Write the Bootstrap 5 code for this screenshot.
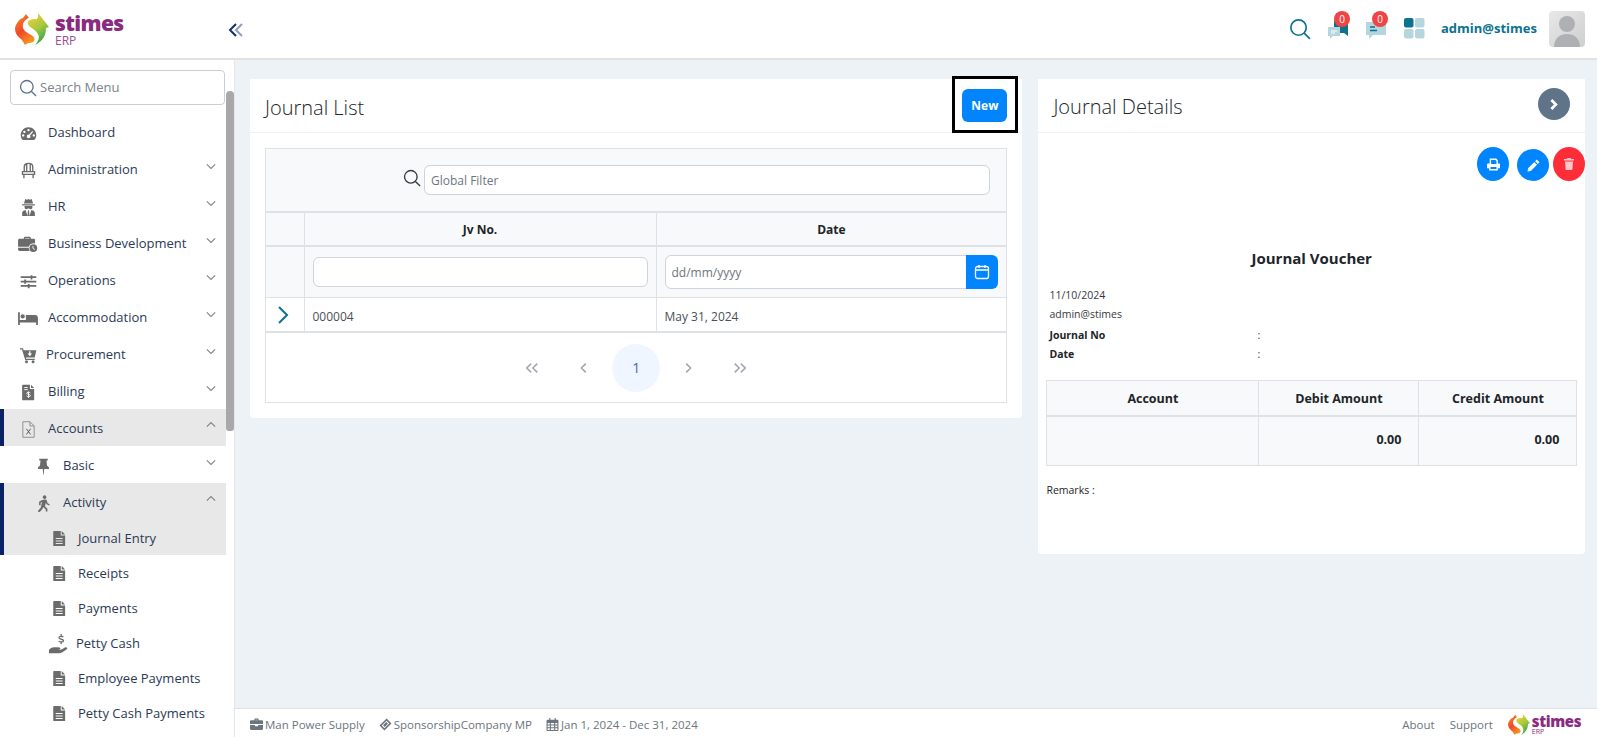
<!DOCTYPE html>
<html lang="en">
<head>
  <meta charset="UTF-8">
  <title>Journal Entry</title>
  <link href="https://cdn.jsdelivr.net/npm/bootstrap@5.3.0/dist/css/bootstrap.min.css" rel="stylesheet">
  <style>
    body { font-family: "Open Sans", "Liberation Sans", sans-serif; height: 737px; overflow: hidden; background: #fff; color: #212529; }
    .top-bar { height: 60px; border-bottom: 2px solid #e2e2e2; padding: 0 12px 0 15px; }
    .brand-mark { width: 34px; height: 32px; }
    .brand-text { line-height: 1; margin-left: 6px; width: 66px; color: #8a2b81; }
    .brand-name { font-size: 21px; font-weight: 800; letter-spacing: -.6px; display: block; line-height: 22px; }
    .brand-sub { font-size: 12px; display: block; line-height: 11px; margin-top: 1px; color: #9a4f93; }
    .collapse-btn { margin-left: 107px; margin-top: 2px; width: 16px; height: 16px; }
    .top-icon { position: relative; width: 22px; height: 22px; margin-right: 16px; }
    .top-icon svg { width: 22px; height: 22px; display: block; }
    .count-pill { position: absolute; top: -7px; right: -1px; width: 16px; height: 16px; border-radius: 50%; background: #ef4444; color: #fff; font-size: 10px; line-height: 16px; text-align: center; }
    .user-name { font-size: 13px; font-weight: 700; color: #0b7290; margin: 0 12px 0 0; }
    .avatar { width: 36px; height: 36px; border-radius: 4px; background: linear-gradient(135deg, #e8e8e8, #cfcfcf); overflow: hidden; }
    .page-body { height: 677px; }
    .side-bar { width: 235px; flex: none; position: relative; border-right: 1px solid #e3e6ea; overflow: hidden; }
    .side-search { margin: 10px 9px 8px 10px; height: 35px; border: 1px solid #c9ced6; border-radius: 4px; padding: 0 8px; }
    .side-search svg { width: 18px; height: 18px; flex: none; }
    .side-search input { border: 0; outline: 0; width: 100%; font-size: 13px; margin-left: 3px; padding: 0; color: #6c757d; }
    .side-search input::placeholder { color: #7a828a; }
    .side-list { width: 226px; list-style: none; margin: 0; padding: 0; }
    .side-item { height: 37px; padding: 3px 9px 0 20px; font-size: 13px; color: #2b3a55; }
    .side-item.level-2 { padding-left: 35px; }
    .side-item.level-3 { height: 35px; padding-left: 51px; padding-top: 2px; }
    .side-item.on { background: #e8e8e8; box-shadow: inset 4px 0 0 #0a2166; }
    .side-ic { width: 28px; flex: none; display: flex; align-items: center; }
    .side-ic svg { width: 17px; height: 17px; fill: #6b6b6b; }
    .side-ic.tight { width: 26px; }
    .side-ic.wide { width: 30px; margin-left: -2px; }
    .side-ic.wide svg { width: 20px; height: 17px; }
    .side-ic.hand { width: 27px; margin-left: -2px; }
    .side-ic.hand svg { width: 20px; height: 20px; }
    .side-ic.sheet { width: 27px; padding-left: 1px; }
    .side-ic.sheet svg { width: 15px; height: 15px; }
    .side-arrow { width: 10px; height: 10px; margin-left: auto; margin-right: 1px; margin-top: -8px; fill: none; stroke: #7b838c; stroke-width: 1.300; }
    .side-thumb { position: absolute; top: 31px; right: 0; width: 8px; height: 340px; background: #a8a8a8; border-radius: 4px 4px 3px 3px; }
    .work-area { background: #edf2f6; min-width: 0; }
    .work-scroll { padding: 19px 12px 0 15px; gap: 16px; }
    .panel { border: 0; border-radius: 4px; }
    .panel-left { width: 773px; height: 339px; }
    .panel-right { width: 547px; height: 475px; }
    .panel-head { height: 54px; padding: 0 15px; background: #fff; border-bottom: 1px solid #eef0f2; }
    .panel-title { font-size: 20px; font-weight: 300; margin: 0; margin-top: 2px; color: #212529; }
    .panel-left .panel-title { margin-top: 4px; }
    .btn-new { position: relative; width: 45px; height: 33px; padding: 0; font-size: 12px; font-weight: 700; background: #0085ff; border: 0; border-radius: 6px; color: #fff; }
    .new-mark { position: absolute; inset: -13px -11px -11px -10px; border: 3px solid #000; pointer-events: none; }
    .panel-body-list { padding: 15px; }
    .grid-box { border: 1px solid #dee2e6; }
    .filter-bar { height: 63px; background: #f8f9fa; border-bottom: 1px solid #dee2e6; padding: 0 16px 0 137px; }
    .filter-bar svg { width: 18px; height: 18px; flex: none; margin-right: 3px; margin-top: -4px; }
    .soft-input { border: 1px solid #ced4da; border-radius: 6px; font-size: 12px; height: 30px; padding: 0 6px; box-shadow: none; }
    .soft-input::placeholder { color: #6c757d; }
    .grid-table { table-layout: fixed; font-size: 12px; margin: 0; }
    .grid-table th { background: #f8f9fa; text-align: center; font-weight: 700; height: 33px; padding: 3px 8px 0; vertical-align: middle; border-bottom: 2px solid #dee2e6; color: #212529; }
    .grid-table .filter-row td { background: #f8f9fa; height: 52px; padding: 0 8px; vertical-align: middle; }
    .grid-table .data-row td { height: 34px; padding: 4px 8px 0; vertical-align: middle; color: #495057; border-bottom: 0; }
    .grid-table tr > :first-child { border-left: 0; }
    .grid-table tr > :last-child { border-right: 0; }
    .filter-row td { border-top: 0; }
    .cal-btn { width: 32px; height: 34px; padding: 0; background: #0085ff; border: 0; border-radius: 0 6px 6px 0; }
    .cal-btn svg { width: 16px; height: 16px; }
    .date-input { height: 34px; border-radius: 6px 0 0 6px; padding-top: 2px; }
    .row-open { width: 14px; height: 18px; display: block; margin: -4px 0 0 2px; }
    .pager-row { height: 70px; border-top: 1px solid #dee2e6; }
    .pager-list { margin: 0; gap: 5px; }
    .pager-list .page-link { width: 48px; height: 48px; display: flex; align-items: center; justify-content: center; padding: 0; border: 0; background: none; border-radius: 50% !important; color: #4f46e5; font-size: 14px; }
    .pager-list .page-link svg { width: 14px; height: 14px; fill: none; stroke: #a1a8b3; stroke-width: 1.800; }
    .pager-list .page-item.active .page-link { background: #eff6ff; color: #4f5bd5; }
    .round-btn { border: 0; padding: 0; border-radius: 50%; display: flex; align-items: center; justify-content: center; color: #fff; }
    .toggle-btn { width: 32px; height: 32px; background: #5f7389; margin-top: -3px; }
    .toggle-btn svg, .act-btn svg { width: 13px; height: 13px; fill: #fff; }
    .act-row { height: 34px; margin-top: 14px; }
    .act-btn { width: 32px; height: 34px; background: #0085ff; }
    .act-print { margin-right: 8px; }
    .act-edit { height: 32px; margin: 2px 4px 0 0; }
    .act-del { background: #ff2d37; }
    .act-del svg { fill: #ffc7c9; width: 12px; height: 12px; }
    .vch-title { font-size: 15px; font-weight: 700; text-align: center; margin: 67px 0 18px; line-height: 20px; }
    .vch-meta { font-size: 10.500px; padding-left: 11px; line-height: 19px; color: #343a40; }
    .vch-gap { margin-top: 2px; }
    .vch-label { font-weight: 700; width: 208px; color: #212529; }
    .vch-table { table-layout: fixed; width: 531px; margin: 16px 0 0 8px; font-size: 12.500px; }
    .vch-table th { background: #f8f9fa; text-align: center; font-weight: 700; height: 35px; padding: 3px 0 0; vertical-align: middle; border-bottom: 2px solid #dee2e6; color: #212529; }
    .vch-table td { background: #f8f9fa; height: 50px; padding: 0 17px 0 0; vertical-align: middle; text-align: right; font-weight: 700; color: #212529; }
    .vch-remark { font-size: 10.500px; margin: 17px 0 0 8px; color: #212529; }
    .foot-bar { height: 29px; margin-top: auto; background: #fff; border-top: 1px solid #dfe2e6; padding: 3px 16px 0 15px; font-size: 11.500px; color: #6c757d; }
    .foot-bar svg { width: 13px; height: 13px; fill: #6c757d; margin-right: 2px; flex: none; }
    .foot-part { margin-right: 14px; }
    .foot-link { margin-right: 15px; color: #6c757d; text-decoration: none; }
    .foot-bar .foot-mark { width: 22px; height: 21px; margin: 0 2px 0 0; fill: initial; }
    .foot-brand { color: #8a2b81; line-height: 1; }
    .foot-name { font-size: 15px; font-weight: 800; letter-spacing: -.4px; display: block; line-height: 13px; }
    .foot-sub { font-size: 7px; display: block; line-height: 7px; }
  </style>
</head>
<body>
  <svg width="0" height="0" class="position-absolute">
    <defs>
      <linearGradient id="swoopRed" x1="0" y1="0" x2="0.6" y2="1"><stop offset="0" stop-color="#f59a23"/><stop offset="0.55" stop-color="#f0472a"/><stop offset="1" stop-color="#f7941d"/></linearGradient>
      <linearGradient id="swoopGreen" x1="0.2" y1="0" x2="0.7" y2="1"><stop offset="0" stop-color="#f5cf3a"/><stop offset="0.5" stop-color="#a8c83c"/><stop offset="1" stop-color="#22a24a"/></linearGradient>
      <symbol id="logoMark" viewBox="0 0 34 32">
        <path fill="url(#swoopRed)" d="M11 1l3 4C9 7 7 11 8 15c2 6 11 6 11.500 11 .5 3-2.500 4-6.500 4l-3 2-3-5C3 24 0 20 0 16 0 12 4 6 8 5z"/>
        <path fill="url(#swoopGreen)" d="M23 0l11 14-3 1c0 7-3 13-11 17 4-4 4-8 2-11-3-5-10-5-10.500-10C11 7 14 5 18 5h5z"/>
        <path fill="none" stroke="#fff" stroke-width="2.500" d="M22 5C14 4 10 8 12 12c2 5 10 5 10.500 12 .2 3-2.500 6-5.500 7"/>
      </symbol>
      <symbol id="icSearch" viewBox="0 0 20 20"><circle cx="8.700" cy="8.700" r="7" fill="none" stroke="currentColor" stroke-width="1.500"/><path d="M13.800 13.800L19 19" stroke="currentColor" stroke-width="1.500" fill="none"/></symbol>
      <symbol id="icGauge" viewBox="0 0 24 24"><path fill-rule="evenodd" d="M12 3C5.900 3 1 7.900 1 14c0 2.400.8 4.600 2 6.300.3.400.7.700 1.200.700h15.600c.5 0 .9-.3 1.200-.7 1.200-1.700 2-3.900 2-6.300 0-6.100-4.900-11-11-11zM12 5.500a1.700 1.700 0 1 1 0 3.400 1.700 1.700 0 0 1 0-3.400zM6.200 8a1.700 1.700 0 1 1 0 3.400 1.700 1.700 0 0 1 0-3.400zM4.500 13a1.700 1.700 0 1 1 0 3.400 1.700 1.700 0 0 1 0-3.400zM19.500 13a1.700 1.700 0 1 1 0 3.400 1.700 1.700 0 0 1 0-3.400zM17.300 8.500l1.200 1-4.300 5.300a2.500 2.500 0 1 1-1.500-1.100z"/></symbol>
      <symbol id="icChair" viewBox="0 0 24 24"><path fill="none" stroke="#6b6b6b" stroke-width="1.900" d="M6 13V7c0-3 2.500-5 6-5s6 2 6 5v6M9.500 3v10M14.500 3v10M3.500 13.500h17v4h-17zM5.500 17.500V23M18.500 17.500V23"/></symbol>
      <symbol id="icSpy" viewBox="0 0 24 24"><path d="M7.500 0l2.500 1 2-1 2 1 2.500-1 2 6.500h-13zM3 7.500h18V9H3zM6.500 10h11v2.500c0 1-1 2-2.500 2s-2-1-3-1-1.500 1-3 1-2.500-1-2.500-2zM3 24v-4c0-2.500 2-4 5-4.500L10.500 24zM21 24v-4c0-2.500-2-4-5-4.500L13.500 24zM11.300 16h1.400l.8 8h-3z"/></symbol>
      <symbol id="icBag" viewBox="0 0 28 24"><path fill-rule="evenodd" d="M8 4V3c0-1 1-2 2-2h6c1 0 2 1 2 2v1h4c1.500 0 2 1 2 2v4.500a7 7 0 0 0-9 4.500H0V6c0-1 .7-2 2-2zM10 3v1h6V3zM0 16.500h15c0 1.700.5 3 1.500 4.500H2c-1 0-2-.7-2-2z"/><circle cx="21.500" cy="17" r="5.500"/><path d="M21 14v3.500l2.500 1.500" stroke="#fff" stroke-width="1.200" fill="none"/></symbol>
      <symbol id="icSliders" viewBox="0 0 24 24"><path d="M1 4.500h22v2.500H1zM1 10.800h22v2.500H1zM1 17h22v2.500H1z"/><path d="M15 3h2.500v6H15zM6 9h2.500v6H6zM11 15.500h2.500v6H11z"/></symbol>
      <symbol id="icBed" viewBox="0 0 28 24"><path fill-rule="evenodd" d="M0 3h2.500v11H11V7h13c2.500 0 4 1.500 4 4v10h-2.500v-3.500h-23V21H0z"/><circle cx="6.500" cy="9" r="3"/></symbol>
      <symbol id="icCart" viewBox="0 0 26 24"><path d="M0 1h4.500l1 3H25l-2.500 11H9l.5 2h13v2H8L3 3H0z"/><circle cx="10" cy="21.500" r="2.300"/><circle cx="20" cy="21.500" r="2.300"/><path fill="#fff" d="M14 5.500h2v3.500h2.500l-3.500 4-3.500-4H14z"/></symbol>
      <symbol id="icBill" viewBox="0 0 24 24"><path d="M4 1h10v6h6v15c0 .6-.4 1-1 1H4c-.6 0-1-.4-1-1V2c0-.6.4-1 1-1zM15.500 1l4.500 4.500h-4.500z"/><path fill="none" stroke="#fff" stroke-width="1.300" d="M6 5h5M6 8h5M14.500 12.500c-1-1.200-5-1.200-5 .7 0 2 5.200 1 5.200 3.100 0 2-4.200 2-5.400.6M12 10.500v9"/></symbol>
      <symbol id="icExcel" viewBox="0 0 24 24"><path fill="none" stroke="#8a8a8a" stroke-width="1.300" d="M4 1h10l6 6v16H4zM14 1v6h6"/><path fill="none" stroke="#555" stroke-width="1.400" d="M9 11l6 8M15 11l-6 8"/></symbol>
      <symbol id="icPin" viewBox="0 0 24 24"><path d="M6 1h12v2.500h-1.800l.8 7.500c2 .9 3 2.500 3 4.500H13l-.7 8h-.6l-.7-8H4c0-2 1-3.600 3-4.500l.8-7.500H6z"/></symbol>
      <symbol id="icWalk" viewBox="0 0 24 24"><circle cx="13.500" cy="3" r="2.500"/><path d="M10 7l4.500-.7c1.300 0 2 .7 2.300 1.700l1 3.500 3 1.500-.8 1.800-3.700-1.700-1-2.300-1.300 5 3.500 3.500v4h-2.300v-3l-3.700-3.500-1 3-4.500 5L4 22.500l4-4.500 2-8-2 1v3.500H5.800V9.700z"/></symbol>
      <symbol id="icDoc" viewBox="0 0 24 24"><path fill-rule="evenodd" d="M3 0h11v7h7v16c0 .6-.4 1-1 1H3c-.6 0-1-.4-1-1V1c0-.6.4-1 1-1zM6 11v1.700h11V11zM6 15v1.700h11V15zM6 19v1.700h11V19zM15.500 0L21 5.500h-5.500z"/></symbol>
      <symbol id="icHand" viewBox="0 0 28 28"><path d="M0 22c2-2 4-3.500 7-3.500h4c2.500 0 5 .5 5 2s-2.500 2-6 2h3c3 0 5-1 8-3 2-1.200 4-1 4.500 0s-.5 2-2 3c-3 2-6 4.500-10 4.500H0z"/><path fill="none" stroke="#6b6b6b" stroke-width="1.800" d="M20 4.500c-1-1.500-6-1.500-6 .8 0 2.700 6.300 1.400 6.300 4 0 2.300-5 2.300-6.800.7M17 0v2.500M17 12v2.500"/></symbol>
      <symbol id="icBrief" viewBox="0 0 24 24"><path fill-rule="evenodd" d="M8 4V2.500C8 1.700 8.700 1 9.500 1h5c.8 0 1.500.7 1.500 1.500V4h6c1 0 2 1 2 2v5H0V6c0-1 1-2 2-2zM10 3v1h4V3zM0 13h9v2h6v-2h9v7c0 1-1 2-2 2H2c-1 0-2-1-2-2z"/></symbol>
      <symbol id="icTicket" viewBox="0 0 24 24"><path fill-rule="evenodd" d="M14 1l9 9-13 13-9-9zM14 5L5 14l5 5 9-9zM13.500 7.500l3 3-6 6-3-3z"/></symbol>
      <symbol id="icCal" viewBox="0 0 24 24"><path fill-rule="evenodd" d="M6 0h2v3h8V0h2v3h3c1 0 2 1 2 2v17c0 1-1 2-2 2H3c-1 0-2-1-2-2V5c0-1 1-2 2-2h3zM3 9v3h4V9zM9 9v3h6V9zM17 9v3h4V9zM3 14v3h4v-3zM9 14v3h6v-3zM17 14v3h4v-3zM3 19v3h4v-3zM9 19v3h6v-3zM17 19v3h4v-3z"/></symbol>
      <symbol id="icPrint" viewBox="0 0 24 24"><path fill-rule="evenodd" d="M5 1h12l3 3v6h2c1 0 2 1 2 2v7h-4v4H4v-4H0v-7c0-1 1-2 2-2h3zM7.500 3.500V11h10V5.500l-2-2zM6.500 16.500v4h11v-4z"/></symbol>
      <symbol id="icPen" viewBox="0 0 24 24"><path d="M18 1l5 5-3 3-5-5zM13.500 5.500l5 5L7 22l-6 1 1-6z"/></symbol>
      <symbol id="icTrash" viewBox="0 0 24 24"><path d="M9 0h6l1 2h6v3H2V2h6zM4 7h16l-1 15c0 1-1 2-2 2H7c-1 0-2-1-2-2z"/></symbol>
      <symbol id="icChevRight" viewBox="0 0 24 24"><path d="M8 2l10 10-10 10-3.500-3.500L11 12 4.500 5.500z"/></symbol>
    </defs>
  </svg>

  <header class="top-bar d-flex align-items-center">
    <svg class="brand-mark"><use href="#logoMark"/></svg>
    <div class="brand-text">
      <span class="brand-name">stimes</span>
      <span class="brand-sub">ERP</span>
    </div>
    <svg class="collapse-btn" viewBox="0 0 16 16" fill="none" stroke-width="2"><path d="M14 2L8 8l6 6" stroke="#8fa0bf"/><path d="M8 2L2 8l6 6" stroke="#12306e"/></svg>

    <div class="ms-auto d-flex align-items-center">
      <div class="top-icon" style="color:#0b7290"><svg><use href="#icSearch"/></svg></div>
      <div class="top-icon">
        <svg viewBox="0 0 22 22"><path fill="#0b7290" d="M7 3h14v15l-4-3H7z"/><path fill="#b5d5df" d="M1 9h12v9H6l-3 3v-3H1z"/><path stroke="#fff" d="M4 13h6M4 15h4"/></svg>
        <span class="count-pill">0</span>
      </div>
      <div class="top-icon">
        <svg viewBox="0 0 22 22"><path fill="#b5d5df" d="M1 4h20v13H8l-4 4v-4H1z"/><path stroke="#0b7290" stroke-width="1.500" d="M5 9h5M5 12.500h7"/></svg>
        <span class="count-pill">0</span>
      </div>
      <div class="top-icon">
        <svg viewBox="0 0 22 22"><rect x="1" width="9.500" height="9.500" rx="2" fill="#0b7290"/><rect x="12" width="9.500" height="9.500" rx="2" fill="#b5d5df"/><rect x="1" y="11" width="9.500" height="9.500" rx="2" fill="#b5d5df"/><rect x="12" y="11" width="9.500" height="9.500" rx="2" fill="#b5d5df"/></svg>
      </div>
      <p class="user-name">admin@stimes</p>
      <div class="avatar"><svg viewBox="0 0 36 36" width="36" height="36"><circle cx="18" cy="13" r="8" fill="#aeb0b3"/><path d="M5 36c0-9 6-13 13-13s13 4 13 13z" fill="#aeb0b3"/></svg></div>
    </div>
  </header>

  <div class="page-body d-flex">
    <aside class="side-bar">
      <div class="side-search d-flex align-items-center" style="color:#5f7389">
        <svg><use href="#icSearch"/></svg>
        <input type="text" placeholder="Search Menu">
      </div>
      <div class="side-thumb"></div>
      <ul class="side-list">
        <li class="side-item d-flex align-items-center"><span class="side-ic"><svg><use href="#icGauge"/></svg></span>Dashboard</li>
        <li class="side-item d-flex align-items-center"><span class="side-ic"><svg><use href="#icChair"/></svg></span>Administration<svg class="side-arrow" viewBox="0 0 12 12"><path d="M1 4l5 5 5-5"/></svg></li>
        <li class="side-item d-flex align-items-center"><span class="side-ic"><svg><use href="#icSpy"/></svg></span>HR<svg class="side-arrow" viewBox="0 0 12 12"><path d="M1 4l5 5 5-5"/></svg></li>
        <li class="side-item d-flex align-items-center"><span class="side-ic wide"><svg><use href="#icBag"/></svg></span>Business Development<svg class="side-arrow" viewBox="0 0 12 12"><path d="M1 4l5 5 5-5"/></svg></li>
        <li class="side-item d-flex align-items-center"><span class="side-ic"><svg><use href="#icSliders"/></svg></span>Operations<svg class="side-arrow" viewBox="0 0 12 12"><path d="M1 4l5 5 5-5"/></svg></li>
        <li class="side-item d-flex align-items-center"><span class="side-ic wide"><svg><use href="#icBed"/></svg></span>Accommodation<svg class="side-arrow" viewBox="0 0 12 12"><path d="M1 4l5 5 5-5"/></svg></li>
        <li class="side-item d-flex align-items-center"><span class="side-ic tight"><svg><use href="#icCart"/></svg></span>Procurement<svg class="side-arrow" viewBox="0 0 12 12"><path d="M1 4l5 5 5-5"/></svg></li>
        <li class="side-item d-flex align-items-center"><span class="side-ic"><svg><use href="#icBill"/></svg></span>Billing<svg class="side-arrow" viewBox="0 0 12 12"><path d="M1 4l5 5 5-5"/></svg></li>
        <li class="side-item on d-flex align-items-center"><span class="side-ic"><svg><use href="#icExcel"/></svg></span>Accounts<svg class="side-arrow" viewBox="0 0 12 12"><path d="M1 8l5-5 5 5"/></svg></li>
        <li class="side-item level-2 d-flex align-items-center"><span class="side-ic"><svg><use href="#icPin"/></svg></span>Basic<svg class="side-arrow" viewBox="0 0 12 12"><path d="M1 4l5 5 5-5"/></svg></li>
        <li class="side-item level-2 on d-flex align-items-center"><span class="side-ic"><svg><use href="#icWalk"/></svg></span>Activity<svg class="side-arrow" viewBox="0 0 12 12"><path d="M1 8l5-5 5 5"/></svg></li>
        <li class="side-item level-3 on d-flex align-items-center"><span class="side-ic sheet"><svg><use href="#icDoc"/></svg></span>Journal Entry</li>
        <li class="side-item level-3 d-flex align-items-center"><span class="side-ic sheet"><svg><use href="#icDoc"/></svg></span>Receipts</li>
        <li class="side-item level-3 d-flex align-items-center"><span class="side-ic sheet"><svg><use href="#icDoc"/></svg></span>Payments</li>
        <li class="side-item level-3 d-flex align-items-center"><span class="side-ic hand"><svg><use href="#icHand"/></svg></span>Petty Cash</li>
        <li class="side-item level-3 d-flex align-items-center"><span class="side-ic sheet"><svg><use href="#icDoc"/></svg></span>Employee Payments</li>
        <li class="side-item level-3 d-flex align-items-center"><span class="side-ic sheet"><svg><use href="#icDoc"/></svg></span>Petty Cash Payments</li>
      </ul>
    </aside>

    <main class="work-area flex-grow-1 d-flex flex-column">
      <div class="work-scroll d-flex align-items-start">
        <section class="card panel panel-left">
          <div class="panel-head d-flex align-items-center justify-content-between">
            <h5 class="panel-title">Journal List</h5>
            <button type="button" class="btn btn-new">New<span class="new-mark"></span></button>
          </div>
          <div class="panel-body-list">
            <div class="grid-box">
              <div class="filter-bar d-flex align-items-center" style="color:#343a40">
                <svg><use href="#icSearch"/></svg>
                <input type="text" class="form-control soft-input" placeholder="Global Filter">
              </div>
              <table class="table table-bordered grid-table">
                <colgroup><col style="width:38px"><col style="width:352px"><col></colgroup>
                <thead>
                  <tr><th></th><th>Jv No.</th><th>Date</th></tr>
                </thead>
                <tbody>
                  <tr class="filter-row">
                    <td></td>
                    <td><input type="text" class="form-control soft-input"></td>
                    <td>
                      <div class="input-group">
                        <input type="text" class="form-control soft-input date-input" placeholder="dd/mm/yyyy">
                        <button type="button" class="btn cal-btn d-flex align-items-center justify-content-center">
                          <svg viewBox="0 0 16 16" fill="none" stroke="#fff" stroke-width="1.300"><rect x="1.500" y="2.500" width="13" height="12" rx="2"/><path d="M1.500 6h13M5 1v3M11 1v3"/></svg>
                        </button>
                      </div>
                    </td>
                  </tr>
                  <tr class="data-row">
                    <td><svg class="row-open" viewBox="0 0 14 18" fill="none" stroke="#0b7290" stroke-width="2"><path d="M3 1l8 8-8 8"/></svg></td>
                    <td>000004</td>
                    <td>May 31, 2024</td>
                  </tr>
                </tbody>
              </table>
              <div class="pager-row d-flex align-items-center justify-content-center">
                <ul class="pagination pager-list">
                  <li class="page-item"><a class="page-link" href="#"><svg viewBox="0 0 16 16"><path d="M7 3L2 8l5 5M14 3L9 8l5 5"/></svg></a></li>
                  <li class="page-item"><a class="page-link" href="#"><svg viewBox="0 0 16 16"><path d="M10 3L5 8l5 5"/></svg></a></li>
                  <li class="page-item active"><a class="page-link" href="#">1</a></li>
                  <li class="page-item"><a class="page-link" href="#"><svg viewBox="0 0 16 16"><path d="M6 3l5 5-5 5"/></svg></a></li>
                  <li class="page-item"><a class="page-link" href="#"><svg viewBox="0 0 16 16"><path d="M2 3l5 5-5 5M9 3l5 5-5 5"/></svg></a></li>
                </ul>
              </div>
            </div>
          </div>
        </section>

        <section class="card panel panel-right">
          <div class="panel-head d-flex align-items-center justify-content-between">
            <h5 class="panel-title">Journal Details</h5>
            <button type="button" class="round-btn toggle-btn"><svg><use href="#icChevRight"/></svg></button>
          </div>
          <div class="act-row d-flex justify-content-end">
            <button type="button" class="round-btn act-btn act-print"><svg><use href="#icPrint"/></svg></button>
            <button type="button" class="round-btn act-btn act-edit"><svg><use href="#icPen"/></svg></button>
            <button type="button" class="round-btn act-btn act-del"><svg><use href="#icTrash"/></svg></button>
          </div>
          <h6 class="vch-title">Journal Voucher</h6>
          <div class="vch-meta">
            <div>11/10/2024</div>
            <div>admin@stimes</div>
            <div class="d-flex vch-gap"><span class="vch-label">Journal No</span><span>:</span></div>
            <div class="d-flex"><span class="vch-label">Date</span><span>:</span></div>
          </div>
          <table class="table table-bordered vch-table">
            <colgroup><col style="width:212px"><col style="width:160px"><col></colgroup>
            <thead><tr><th>Account</th><th>Debit Amount</th><th>Credit Amount</th></tr></thead>
            <tbody><tr><td></td><td>0.00</td><td>0.00</td></tr></tbody>
          </table>
          <p class="vch-remark">Remarks :</p>
        </section>
      </div>

      <footer class="foot-bar d-flex align-items-center">
        <span class="foot-part d-flex align-items-center"><svg><use href="#icBrief"/></svg>Man Power Supply</span>
        <span class="foot-part d-flex align-items-center"><svg><use href="#icTicket"/></svg>SponsorshipCompany MP</span>
        <span class="d-flex align-items-center"><svg><use href="#icCal"/></svg>Jan 1, 2024 - Dec 31, 2024</span>
        <a class="foot-link ms-auto" href="#">About</a>
        <a class="foot-link" href="#">Support</a>
        <svg class="foot-mark"><use href="#logoMark"/></svg>
        <span class="foot-brand"><span class="foot-name">stimes</span><span class="foot-sub">ERP</span></span>
      </footer>
    </main>
  </div>
</body>
</html>
